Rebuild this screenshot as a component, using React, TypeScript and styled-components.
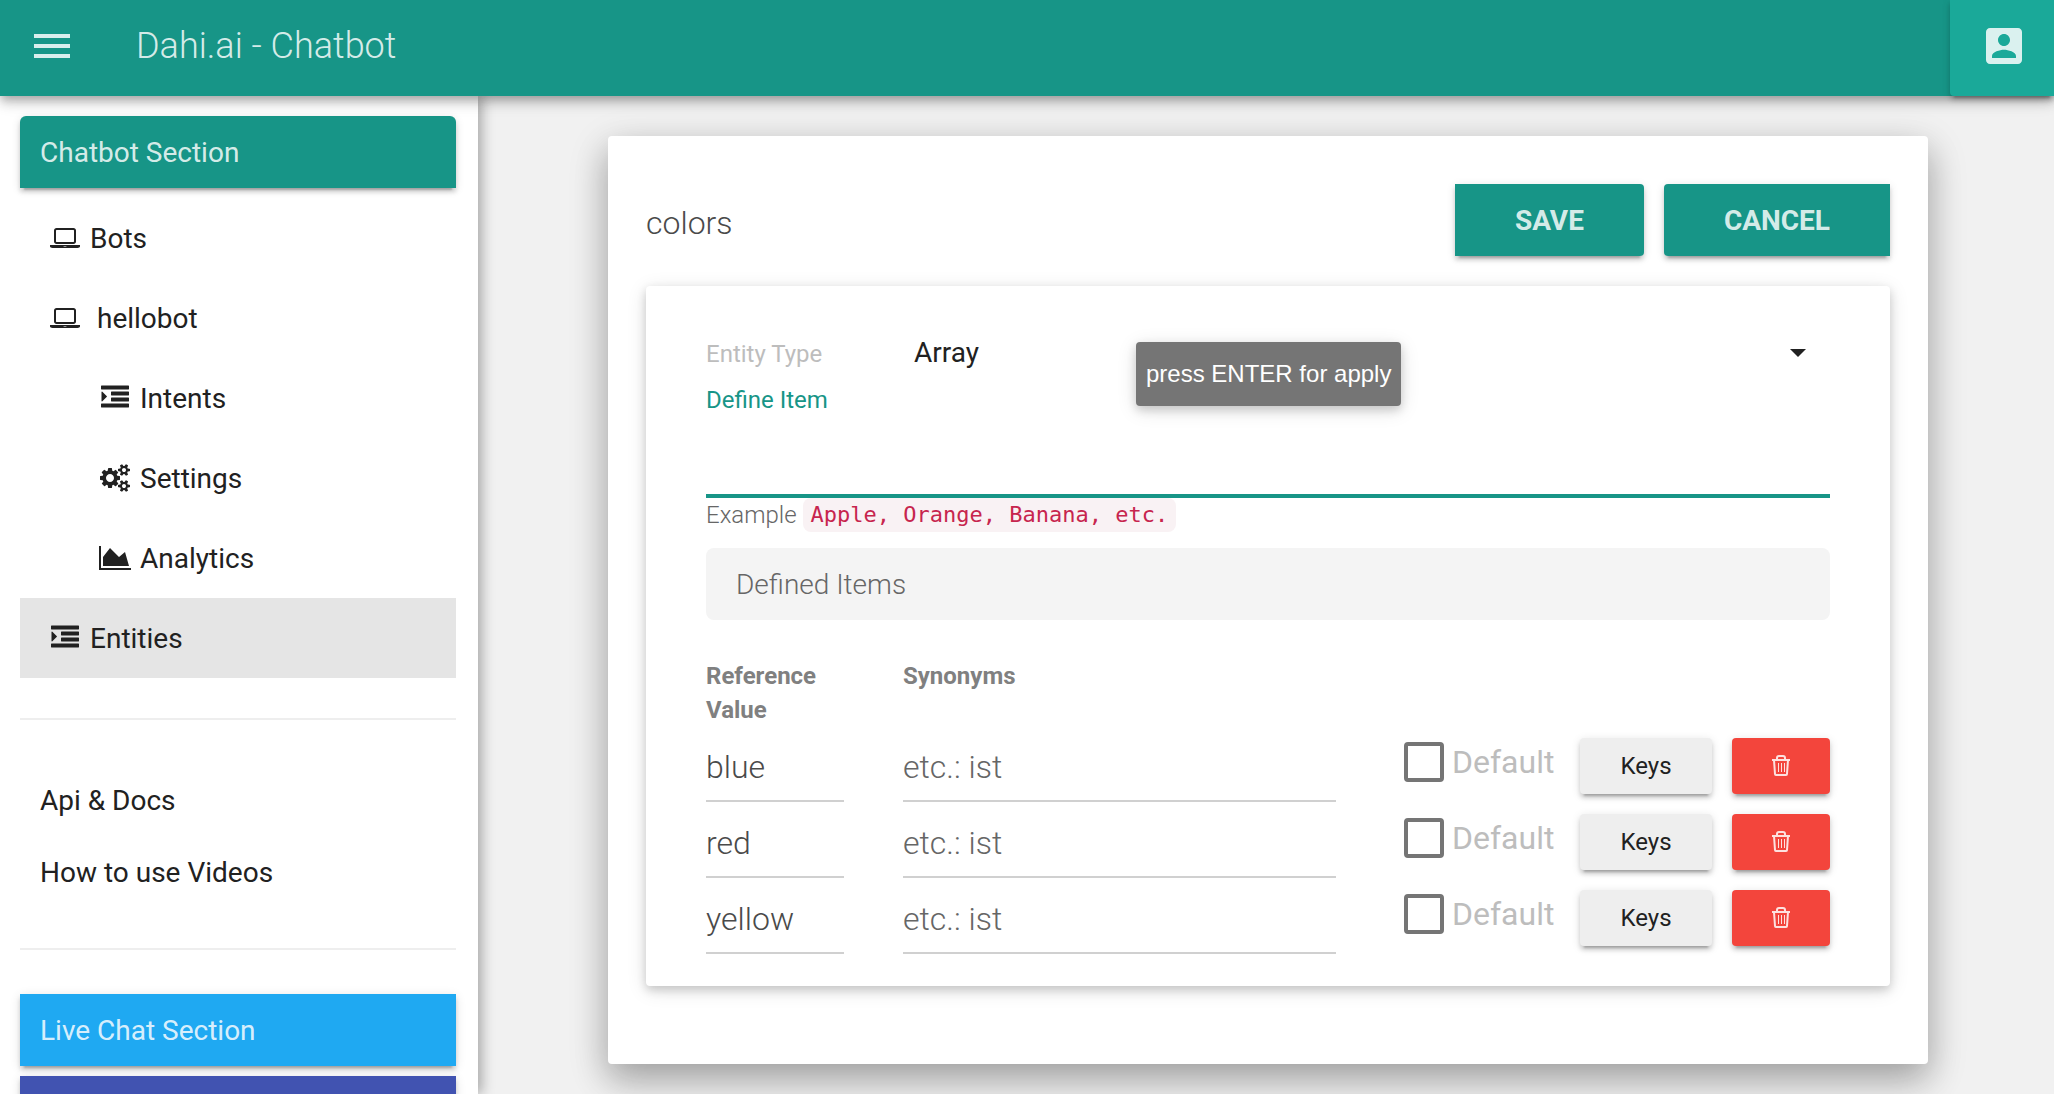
import React from "react";
import styled, { createGlobalStyle, css } from "styled-components";

const teal = "#179587";
const onDark = "rgba(255, 255, 255, 0.84)";
const ink = "#212121";

const raised = css`
  box-shadow: 0 6px 2px -4px rgba(0, 0, 0, 0.2), 0 4px 4px rgba(0, 0, 0, 0.14),
    0 2px 10px rgba(0, 0, 0, 0.12);
`;

const GlobalStyle = createGlobalStyle`
  * { box-sizing: border-box; }
  body {
    margin: 0;
    background: #f1f1f1;
    color: ${ink};
    font-family: Roboto, "Liberation Sans", sans-serif;
    font-size: 28px;
    overflow: hidden;
  }
  button, input, select { font-family: inherit; }
`;

const Page = styled.div`
  display: flex;
  flex-direction: column;
  height: 100vh;
`;

const Header = styled.header`
  position: relative;
  z-index: 2;
  display: flex;
  flex: none;
  height: 96px;
  padding-left: 28px;
  background: ${teal};
  color: ${onDark};
  box-shadow: 0 4px 8px -2px rgba(0, 0, 0, 0.2), 0 8px 10px rgba(0, 0, 0, 0.14),
    0 2px 20px rgba(0, 0, 0, 0.12);
`;

const IconButton = styled.button`
  display: flex;
  align-items: center;
  padding: 0 0 4px;
  border: 0;
  background: none;
  color: inherit;
`;

const Title = styled.h1`
  flex: 1;
  margin: 0 0 0 60px;
  font-size: 36px;
  font-weight: 300;
  line-height: 92px;
`;

const AccountButton = styled(IconButton)`
  justify-content: center;
  width: 104px;
  padding-left: 4px;
  border-radius: 0 0 0 4px;
  background: #1aa999;
  ${raised}
`;

const Body = styled.div`
  display: flex;
  flex: 1;
  min-height: 0;
`;

const SidebarFrame = styled.div`
  display: flex;
  flex: none;
  box-shadow: 4px 0 12px rgba(0, 0, 0, 0.3);
`;

const Sidebar = styled.aside`
  width: 478px;
  padding: 20px 22px 0 20px;
  overflow: hidden;
  background: #fff;
`;

const SectionLink = styled.a<{ $color: string; $first?: boolean }>`
  display: block;
  height: 72px;
  margin-bottom: 10px;
  padding: 0 20px;
  border-radius: ${(p) => (p.$first ? "6px 6px 0 0" : "0")};
  background: ${(p) => p.$color};
  color: ${onDark};
  line-height: 74px;
  text-decoration: none;
  ${raised}
`;

const NavLink = styled.a<{ $nested?: boolean; $active?: boolean }>`
  display: flex;
  gap: 10px;
  align-items: center;
  height: 80px;
  padding-left: ${(p) => (p.$nested ? 80 : 30)}px;
  background: ${(p) => (p.$active ? "#e5e5e5" : "transparent")};
  color: ${ink};
  text-decoration: none;
`;

const NavIcon = styled.span`
  display: flex;
  flex: none;
  justify-content: center;
  width: 30px;

  svg {
    flex: none;
  }
`;

const Divider = styled.hr`
  height: 2px;
  margin: 40px 0 44px;
  border: 0;
  background: #eee;
`;

const DocLink = styled.a`
  display: block;
  height: 72px;
  padding-left: 20px;
  color: ${ink};
  line-height: 74px;
  text-decoration: none;
`;

const Main = styled.main`
  flex: 1;
  min-width: 0;
  padding: 40px 126px 30px 130px;
`;

const Card = styled.form`
  padding: 48px 38px 78px;
  border-radius: 4px;
  background: #fff;
  box-shadow: 0 16px 34px rgba(0, 0, 0, 0.2), 0 12px 40px rgba(0, 0, 0, 0.19);
`;

const CardHead = styled.div`
  display: flex;
  gap: 20px;
  align-items: center;
  margin-bottom: 30px;
`;

const NameInput = styled.input`
  flex: 1;
  min-width: 0;
  height: 72px;
  padding: 6px 0 0;
  border: 0;
  outline: 0;
  background: none;
  color: #4a4a4a;
  font-size: 32px;
  font-weight: 300;
`;

const ActionButton = styled.button<{ $side: "left" | "right" }>`
  height: 72px;
  padding: 0 60px;
  border: 0;
  border-radius: ${(p) => (p.$side === "left" ? "0 4px 4px 0" : "4px 0 0 4px")};
  background: ${teal};
  color: ${onDark};
  font-size: 28px;
  font-weight: 700;
  ${raised}
`;

const Panel = styled.section`
  padding: 44px 60px 30px;
  border-radius: 4px;
  background: #fff;
  box-shadow: 0 4px 10px rgba(0, 0, 0, 0.16), 0 4px 20px rgba(0, 0, 0, 0.12);
`;

const Field = styled.div`
  position: relative;
  display: flex;
`;

const FieldLabel = styled.label<{ $color: string }>`
  display: block;
  flex: none;
  width: 208px;
  height: 46px;
  color: ${(p) => p.$color};
  font-size: 24px;
  line-height: 48px;
`;

const TypeSelect = styled.select`
  flex: 1;
  height: 44px;
  padding: 0;
  border: 0;
  outline: 0;
  appearance: none;
  background: none;
  color: ${ink};
  font-size: 28px;
`;

const Caret = styled.span`
  align-self: center;
  margin-right: 24px;
  border: 8px solid transparent;
  border-top-color: ${ink};
  border-bottom: 0;
`;

const Tooltip = styled.div`
  position: absolute;
  top: 12px;
  left: 430px;
  padding: 0 10px;
  border-radius: 4px;
  background: #757575;
  color: #fff;
  font-family: "Liberation Sans", Arial, sans-serif;
  font-size: 24px;
  line-height: 64px;
  box-shadow: 0 4px 10px rgba(0, 0, 0, 0.16), 0 4px 20px rgba(0, 0, 0, 0.12);
`;

const ItemInput = styled.input`
  display: block;
  width: 100%;
  height: 76px;
  padding: 0;
  border: 0;
  border-bottom: 4px solid ${teal};
  outline: 0;
  background: none;
  font-size: 32px;
  font-weight: 300;
`;

const Hint = styled.p`
  display: flex;
  gap: 6px;
  margin: 0 0 16px;
  color: #666;
  font-size: 24px;
  font-weight: 300;
  line-height: 34px;
`;

const Code = styled.code`
  padding: 0 8px;
  border-radius: 8px;
  background: #f9f2f4;
  color: #c7254e;
  font-family: "DejaVu Sans Mono", "Liberation Mono", monospace;
  font-size: 22px;
  font-weight: 400;
`;

const ItemsTitle = styled.h2`
  height: 72px;
  margin: 0 0 38px;
  padding: 0 30px;
  border-radius: 8px;
  background: #f4f4f4;
  color: #666;
  font-size: 28px;
  font-weight: 300;
  line-height: 74px;
`;

const Table = styled.table`
  width: 100%;
  table-layout: fixed;
  border-collapse: collapse;
`;

const HeadCell = styled.th<{ $width?: number; $pad?: number }>`
  width: ${(p) => (p.$width ? `${p.$width}px` : "auto")};
  height: 70px;
  padding: 1px ${(p) => p.$pad ?? 0}px 0 0;
  color: #808080;
  font-size: 24px;
  font-weight: 700;
  line-height: 34px;
  text-align: left;
  vertical-align: top;
`;

const Cell = styled.td<{ $pad?: number }>`
  height: 76px;
  padding: 0 ${(p) => p.$pad ?? 0}px 0 0;
  vertical-align: top;
`;

const CellInput = styled.input`
  display: block;
  width: 100%;
  height: 74px;
  padding: 6px 0 0;
  border: 0;
  border-bottom: 2px solid #d0d0d0;
  border-radius: 0;
  outline: 0;
  background: none;
  color: #4a4a4a;
  font-size: 32px;
  font-weight: 300;

  &::placeholder {
    color: #666;
    opacity: 1;
  }
`;

const CheckLabel = styled.label`
  display: flex;
  gap: 8px;
  align-items: center;
  height: 68px;
  color: #bdbdbd;
  font-size: 32px;
`;

const CheckBox = styled.input`
  flex: none;
  width: 40px;
  height: 40px;
  margin: 0;
  border: 4px solid #757575;
  border-radius: 4px;
  appearance: none;
  background: #fff;
`;

const RowButton = styled.button<{ $danger?: boolean }>`
  display: flex;
  align-items: center;
  justify-content: center;
  width: ${(p) => (p.$danger ? 98 : 132)}px;
  height: 56px;
  margin-top: 10px;
  padding: 0;
  border: 0;
  border-radius: 4px;
  background: ${(p) => (p.$danger ? "#f3453c" : "#eee")};
  color: ${(p) => (p.$danger ? onDark : ink)};
  font-size: 24px;
  ${raised}
`;

function MenuIcon() {
  return (
    <svg width="48" height="48" viewBox="0 0 24 24" fill="currentColor" aria-hidden="true">
      <path d="M3 18h18v-2H3v2zm0-5h18v-2H3v2zm0-7v2h18V6H3z" />
    </svg>
  );
}

function AccountIcon() {
  return (
    <svg width="48" height="48" viewBox="0 0 24 24" fill="currentColor" aria-hidden="true">
      <path d="M3 5v14c0 1.100.89 2 2 2h14c1.100 0 2-.9 2-2V5c0-1.100-.9-2-2-2H5c-1.110 0-2 .9-2 2zm12 4c0 1.660-1.340 3-3 3s-3-1.340-3-3 1.340-3 3-3 3 1.340 3 3zm-9 8c0-2 4-3.100 6-3.100s6 1.100 6 3.100v1H6v-1z" />
    </svg>
  );
}

const laptopPath =
  "M416 1152q-66 0-113-47t-47-113v-704q0-66 47-113t113-47h1088q66 0 113 47t47 113v704q0 66-47 113t-113 47h-1088zm-32-864v704q0 13 9.500 22.500t22.500 9.500h1088q13 0 22.500-9.500t9.500-22.500v-704q0-13-9.500-22.500t-22.500-9.500h-1088q-13 0-22.500 9.500t-9.500 22.500zm1376 928h160v96q0 40-47 68t-113 28h-1600q-66 0-113-28t-47-68v-96h1760zm-720 96q16 0 16-16t-16-16h-160q-16 0-16 16t16 16h160z";
const indentPath =
  "M384 800q0 14-9 23l-288 288q-9 9-23 9-13 0-22.500-9.500t-9.500-22.500v-576q0-13 9.500-22.500t22.500-9.500q14 0 23 9l288 288q9 9 9 23zm1408 480v192q0 13-9.500 22.500t-22.500 9.500h-1728q-13 0-22.500-9.500t-9.500-22.500v-192q0-13 9.500-22.500t22.500-9.500h1728q13 0 22.500 9.500t9.500 22.500zm0-384v192q0 13-9.500 22.500t-22.500 9.500h-1088q-13 0-22.500-9.500t-9.500-22.500v-192q0-13 9.500-22.500t22.500-9.500h1088q13 0 22.500 9.500t9.500 22.500zm0-384v192q0 13-9.500 22.500t-22.500 9.500h-1088q-13 0-22.500-9.500t-9.500-22.500v-192q0-13 9.500-22.500t22.500-9.500h1088q13 0 22.500 9.500t9.500 22.500zm0-384v192q0 13-9.500 22.500t-22.500 9.500h-1728q-13 0-22.500-9.500t-9.500-22.500v-192q0-13 9.500-22.500t22.500-9.500h1728q13 0 22.500 9.500t9.500 22.500z";
const cogsPath =
  "M896 896q0-106-75-181t-181-75-181 75-75 181 75 181 181 75 181-75 75-181zm768 512q0-52-38-90t-90-38-90 38-38 90q0 53 37.500 90.500t90.500 37.500 90.500-37.500 37.500-90.500zm0-1024q0-52-38-90t-90-38-90 38-38 90q0 53 37.500 90.500t90.500 37.500 90.500-37.500 37.500-90.500zm-384 421v185q0 10-7 19.500t-16 10.500l-155 24q-11 35-32 76 34 48 90 115 7 11 7 20 0 12-7 19-23 30-82.500 89.500t-78.500 59.500q-11 0-21-7l-115-90q-37 19-77 31-11 108-23 155-7 24-30 24h-186q-11 0-20-7.500t-10-17.500l-23-153q-34-10-75-31l-118 89q-7 7-20 7-11 0-21-8-144-133-144-160 0-9 7-19 10-14 41-53t47-61q-23-44-35-82l-152-24q-10-1-17-9.500t-7-19.500v-185q0-10 7-19.500t16-10.500l155-24q11-35 32-76-34-48-90-115-7-11-7-20 0-12 7-20 22-30 82-89t79-59q11 0 21 7l115 90q34-18 77-32 11-108 23-154 7-24 30-24h186q11 0 20 7.500t10 17.500l23 153q34 10 75 31l118-89q8-7 20-7 11 0 21 8 144 133 144 160 0 8-7 19-12 16-42 54t-45 60q23 48 34 82l152 23q10 2 17 10.500t7 19.500zm640 533v140q0 16-149 31-12 27-30 52 51 113 51 138 0 4-4 7-122 71-124 71-8 0-46-47t-52-68q-20 2-30 2t-30-2q-14 21-52 68t-46 47q-2 0-124-71-4-3-4-7 0-25 51-138-18-25-30-52-149-15-149-31v-140q0-16 149-31 13-29 30-52-51-113-51-138 0-4 4-7 4-2 35-20t59-34 30-16q8 0 46 46.500t52 67.500q20-2 30-2t30 2q51-71 92-112l6-2q4 0 124 70 4 3 4 7 0 25-51 138 17 23 30 52 149 15 149 31zm0-1024v140q0 16-149 31-12 27-30 52 51 113 51 138 0 4-4 7-122 71-124 71-8 0-46-47t-52-68q-20 2-30 2t-30-2q-14 21-52 68t-46 47q-2 0-124-71-4-3-4-7 0-25 51-138-18-25-30-52-149-15-149-31v-140q0-16 149-31 13-29 30-52-51-113-51-138 0-4 4-7 4-2 35-20t59-34 30-16q8 0 46 46.500t52 67.500q20-2 30-2t30 2q51-71 92-112l6-2q4 0 124 70 4 3 4 7 0 25-51 138 17 23 30 52 149 15 149 31z";
const chartPath =
  "M2048 1536v128h-2048v-1536h128v1408h1920zm-384-1024l256 896h-1664v-576l448-576 576 576z";

const glyphs = {
  laptop: { width: 30, box: "0 -128 1920 1792", path: laptopPath },
  indent: { width: 28, box: "0 0 1792 1792", path: indentPath },
  cogs: { width: 30, box: "0 0 1920 1792", path: cogsPath },
  chart: { width: 32, box: "0 0 2048 1792", path: chartPath },
};

function Glyph({ name }: { name: keyof typeof glyphs }) {
  const glyph = glyphs[name];
  return (
    <NavIcon>
      <svg width={glyph.width} height="28" viewBox={glyph.box} fill="currentColor" aria-hidden="true">
        <path d={glyph.path} />
      </svg>
    </NavIcon>
  );
}

function TrashIcon() {
  return (
    <svg
      width="20"
      height="22"
      viewBox="0 0 20 22"
      fill="none"
      stroke="currentColor"
      strokeWidth="2"
      aria-hidden="true"
    >
      <path d="M1 5h18M3 5l1 14q0 1 1 1h10q1 0 1-1l1-14M6 5V3q0-2 2-2h4q2 0 2 2v2" />
      <path d="M7.500 8v9M10.500 8v9M13.500 8v9" strokeWidth="1" />
    </svg>
  );
}

const values = ["blue", "red", "yellow"];

export default function App() {
  return (
    <>
      <GlobalStyle />
      <Page>
        <Header>
          <IconButton type="button" aria-label="Menu">
            <MenuIcon />
          </IconButton>
          <Title>Dahi.ai - Chatbot</Title>
          <AccountButton type="button" aria-label="Account">
            <AccountIcon />
          </AccountButton>
        </Header>
        <Body>
          <SidebarFrame>
            <Sidebar>
              <SectionLink href="#chatbot" $color={teal} $first>
                Chatbot Section
              </SectionLink>
              <nav>
                <NavLink href="#bots">
                  <Glyph name="laptop" />
                  <span>Bots</span>
                </NavLink>
                <NavLink href="#hellobot">
                  <Glyph name="laptop" />
                  <span>{"\u00a0"}hellobot</span>
                </NavLink>
                <NavLink href="#intents" $nested>
                  <Glyph name="indent" />
                  <span>Intents</span>
                </NavLink>
                <NavLink href="#settings" $nested>
                  <Glyph name="cogs" />
                  <span>Settings</span>
                </NavLink>
                <NavLink href="#analytics" $nested>
                  <Glyph name="chart" />
                  <span>Analytics</span>
                </NavLink>
                <NavLink href="#entities" $active>
                  <Glyph name="indent" />
                  <span>Entities</span>
                </NavLink>
              </nav>
              <Divider />
              <DocLink href="#docs">Api &amp; Docs</DocLink>
              <DocLink href="#videos">How to use Videos</DocLink>
              <Divider />
              <SectionLink href="#live-chat" $color="#1fa9f2">
                Live Chat Section
              </SectionLink>
              <SectionLink href="#more" $color="#4153b1" aria-label="More" />
            </Sidebar>
          </SidebarFrame>
          <Main>
            <Card onSubmit={(event) => event.preventDefault()}>
              <CardHead>
                <NameInput aria-label="Entity name" defaultValue="colors" />
                <ActionButton type="submit" $side="left">
                  SAVE
                </ActionButton>
                <ActionButton type="button" $side="right">
                  CANCEL
                </ActionButton>
              </CardHead>
              <Panel>
                <Field>
                  <FieldLabel htmlFor="entity-type" $color="#bdbdbd">
                    Entity Type
                  </FieldLabel>
                  <TypeSelect id="entity-type" defaultValue="Array">
                    <option>Array</option>
                  </TypeSelect>
                  <Caret />
                  <Tooltip role="tooltip">press ENTER for apply</Tooltip>
                </Field>
                <FieldLabel htmlFor="define-item" $color={teal}>
                  Define Item
                </FieldLabel>
                <ItemInput id="define-item" />
                <Hint>
                  <span>Example</span>
                  <Code>Apple, Orange, Banana, etc.</Code>
                </Hint>
                <ItemsTitle>Defined Items</ItemsTitle>
                <Table>
                  <thead>
                    <tr>
                      <HeadCell $width={197} $pad={59}>
                        Reference Value
                      </HeadCell>
                      <HeadCell>Synonyms</HeadCell>
                      <HeadCell $width={176} />
                      <HeadCell $width={152} />
                      <HeadCell $width={98} />
                    </tr>
                  </thead>
                  <tbody>
                    {values.map((value) => (
                      <tr key={value}>
                        <Cell $pad={59}>
                          <CellInput aria-label="Reference value" defaultValue={value} />
                        </Cell>
                        <Cell $pad={68}>
                          <CellInput aria-label={`Synonyms of ${value}`} placeholder="etc.: ist" />
                        </Cell>
                        <Cell>
                          <CheckLabel>
                            <CheckBox type="checkbox" />
                            Default
                          </CheckLabel>
                        </Cell>
                        <Cell>
                          <RowButton type="button">Keys</RowButton>
                        </Cell>
                        <Cell>
                          <RowButton type="button" $danger aria-label={`Delete ${value}`}>
                            <TrashIcon />
                          </RowButton>
                        </Cell>
                      </tr>
                    ))}
                  </tbody>
                </Table>
              </Panel>
            </Card>
          </Main>
        </Body>
      </Page>
    </>
  );
}
